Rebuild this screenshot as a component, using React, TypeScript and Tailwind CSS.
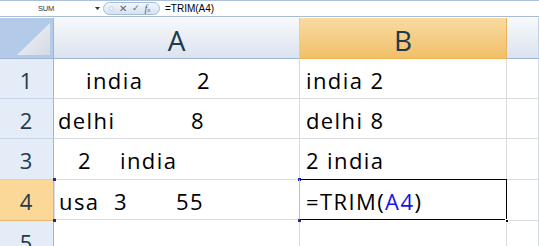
import { Fragment } from 'react'

const cellFont = "font-['Open_Sans',sans-serif] text-[22px] tracking-[1.4px] leading-none text-black pt-[2px]"
const headFont = "font-['Open_Sans',sans-serif] leading-none text-[#1f3a4c]"

function Corner() {
  return (
    <div className="h-full bg-[#b3cae9] border-r border-b border-[#9db5d2] flex items-end justify-end pr-[3px] pb-[3px]">
      <svg width="33" height="32" viewBox="0 0 33 32">
        <defs>
          <linearGradient id="tri" x1="0" y1="0" x2="1" y2="1">
            <stop offset="0" stopColor="#f4f6f9" />
            <stop offset="1" stopColor="#d3dae3" />
          </linearGradient>
        </defs>
        <polygon points="33,0 33,32 0,32" fill="url(#tri)" />
      </svg>
    </div>
  )
}

function ColHead({ label, active }: { label?: string; active?: boolean }) {
  return (
    <div
      className={`h-full flex items-center justify-center border-b border-r ${
        active
          ? 'bg-gradient-to-b from-[#f9dba0] to-[#f1bf69] border-[#e9b461] border-b-[#f2b454]'
          : 'bg-gradient-to-b from-[#f7f9fc] to-[#dbe3ee] border-[#c3d1e2] border-b-[#9db5d2]'
      }`}
    >
      {label && <span className={`${headFont} text-[28px] pt-[3px]`}>{label}</span>}
    </div>
  )
}

function RowHead({ n, active }: { n: number; active?: boolean }) {
  return (
    <div
      className={`h-full flex items-center justify-center border-r border-b ${
        active ? 'bg-[#fcd898] border-r-[#f0b24c] border-b-[#e8b867]' : 'bg-[#e4ecf7] border-r-[#9db5d2] border-b-[#c5d3e4]'
      }`}
    >
      <span className={`${headFont} text-[22px] pr-[1px] pt-[2px]`}>{n}</span>
    </div>
  )
}

function Cell({ children, className = '' }: { children?: React.ReactNode; className?: string }) {
  return (
    <div className={`h-full flex items-center border-r border-b border-[#d8dbe0] whitespace-pre ${cellFont} ${className}`}>
      {children}
    </div>
  )
}

function Handle({ pos }: { pos: string }) {
  return <span className={`absolute w-[3px] h-[3px] bg-[#2424a8] ${pos}`} />
}

export default function App() {
  return (
    <div className="w-[539px] h-[246px] overflow-hidden bg-white flex flex-col">
      {/* ribbon edge */}
      <div className="h-[5px] bg-[#d7e4f3] border-b border-[#aac0da] flex">
        <div className="w-[101px] border-r border-[#b4c7de]" />
        <div className="w-[203px] border-r border-[#b4c7de]" />
        <div className="w-[98px] border-r border-[#b4c7de]" />
        <div className="w-[90px] border-r border-[#b4c7de]" />
      </div>

      {/* formula bar */}
      <div className="h-[16px] flex items-center border-b border-[#a6bbd4] bg-white">
        <div className="w-[103px] flex items-center h-full">
          <span className="ml-[38px] font-['Liberation_Sans',sans-serif] text-[7.5px] text-[#333] tracking-[-0.2px]">SUM</span>
          <svg className="ml-auto mr-[3px]" width="5" height="3" viewBox="0 0 5 3">
            <polygon points="0,0 5,0 2.5,3" fill="#333" />
          </svg>
        </div>
        <div className="w-[57px] h-[13px] rounded-full border border-[#a7bcd6] bg-gradient-to-b from-[#f1f6fc] to-[#d6e2f1] flex items-center pl-[5px] gap-[5px]">
          <span className="w-[5px] h-[5px] rounded-full border border-[#c9d2dd] bg-[#eef2f7]" />
          <span className="font-['Liberation_Sans',sans-serif] text-[10px] leading-none text-[#5a6470]">✕</span>
          <span className="font-['DejaVu_Sans',sans-serif] text-[9px] leading-none text-[#5a6470]">✓</span>
          <span className="font-['Liberation_Serif',serif] italic text-[10px] leading-none text-[#5a6470]">
            f<span className="text-[7px]">x</span>
          </span>
        </div>
        <span className="ml-[5px] font-['Liberation_Sans',sans-serif] text-[10px] text-black">=TRIM(A4)</span>
      </div>

      {/* sheet */}
      <div className="grid grid-cols-[54px_246px_207px_1fr] grid-rows-[41px_40px_40px_41px_41px_40px] mt-[1px]">
        <Corner />
        <ColHead label="A" />
        <ColHead label="B" active />
        <ColHead />

        <RowHead n={1} />
        <Cell className="pl-[4px]">
          <span className="ml-[28px] w-[111px]">india</span>
          <span>2</span>
        </Cell>
        <Cell className="pl-[6px]">india 2</Cell>
        <Cell />

        <RowHead n={2} />
        <Cell className="pl-[4px]">
          <span className="w-[133px]">delhi</span>
          <span>8</span>
        </Cell>
        <Cell className="pl-[6px]">delhi 8</Cell>
        <Cell />

        <RowHead n={3} />
        <Cell className="pl-[4px]">
          <span className="ml-[20px] w-[42px]">2</span>
          <span>india</span>
        </Cell>
        <Cell className="pl-[6px]">2 india</Cell>
        <Cell />

        <RowHead n={4} active />
        <div className="relative h-full">
          <Cell className="pl-[4px] border-[#6a6aae] border-t border-l -mt-[1px] h-[41px]">
            <span className="w-[55px]">usa</span>
            <span className="w-[62px]">3</span>
            <span>55</span>
          </Cell>
          <Handle pos="-left-[1px] -top-[2px]" />
          <Handle pos="-left-[1px] -bottom-[1px]" />
          <Handle pos="-right-[1px] -top-[2px]" />
          <Handle pos="-right-[1px] -bottom-[1px]" />
        </div>
        <div className="relative h-full">
          <Cell className="pl-[6px] border border-black border-l-[#d6c84a] -mt-[1px] h-[41px] -ml-[1px]">
            <span>=TRIM(</span>
            <span className="text-[#1414e6]">A4</span>
            <span>)</span>
          </Cell>
          <span className="absolute -right-[2px] -bottom-[2px] w-[4px] h-[4px] bg-black border border-white" />
        </div>
        <Cell />

        <RowHead n={5} />
        <Cell />
        <Cell />
        <Cell />
      </div>
    </div>
  )
}
